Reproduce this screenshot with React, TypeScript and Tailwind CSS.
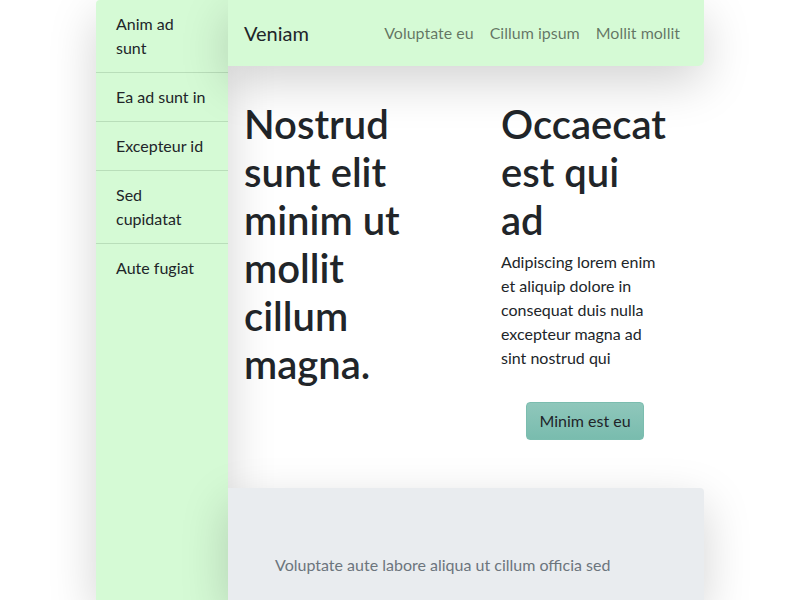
import React from 'react';

const sideItems = ['Anim ad sunt', 'Ea ad sunt in', 'Excepteur id', 'Sed cupidatat', 'Aute fugiat'];
const navLinks = ['Voluptate eu', 'Cillum ipsum', 'Mollit mollit'];

export default function App() {
  return (
    <div
      className="min-h-screen bg-white text-[#212529] overflow-hidden"
      style={{ fontFamily: 'Lato, "Open Sans", sans-serif' }}
    >
      <div className="mx-auto w-[608px] flex min-h-screen">
        {/* Sidebar */}
        <aside className="relative z-10 w-[132px] shrink-0 bg-[#d5fad5] rounded-tl shadow-[0_1rem_3rem_rgba(0,0,0,0.175)]">
          <ul className="flex flex-col">
            {sideItems.map((item, i) => (
              <li
                key={item}
                className={
                  'px-5 py-3 text-base leading-6 ' +
                  (i < sideItems.length - 1 ? 'border-b border-[#b9deba]' : '')
                }
              >
                {item}
              </li>
            ))}
          </ul>
        </aside>

        {/* Main */}
        <main className="flex-1 flex flex-col">
          <nav className="relative z-20 h-[66px] bg-[#d5fad5] rounded-br-md flex items-center justify-between pl-4 pr-4 shadow-[0_1rem_3rem_rgba(0,0,0,0.175)]">
            <span className="text-xl">Veniam</span>
            <div className="flex">
              {navLinks.map((l) => (
                <a key={l} className="px-2 text-base text-black/55">
                  {l}
                </a>
              ))}
            </div>
          </nav>

          <section className="flex pt-[34px] pb-12">
            <div className="w-[257px] pl-4 pr-4">
              <h1 className="text-[40px] leading-[48px] font-semibold w-[200px]">
                Nostrud sunt elit minim ut mollit cillum magna.
              </h1>
            </div>
            <div className="w-[200px] px-4 flex flex-col">
              <h1 className="text-[40px] leading-[48px] font-semibold mb-[6px]">Occaecat est qui ad</h1>
              <p className="text-base leading-6">
                Adipiscing lorem enim et aliquip dolore in consequat duis nulla excepteur magna ad sint nostrud qui
              </p>
              <div className="flex justify-center mt-8">
                <button className="h-[38px] px-3 rounded bg-gradient-to-b from-[#8fc7bb] to-[#79bcae] border border-[#7bbdaf] text-base">
                  Minim est eu
                </button>
              </div>
            </div>
          </section>

          <section className="relative z-10 flex-1 bg-[#e9ecef] rounded-tr pt-[65px] px-[47px] shadow-[0_1rem_3rem_rgba(0,0,0,0.175)]">
            <p className="text-base leading-6 text-[#6c757d]">
              Voluptate aute labore aliqua ut cillum officia sed
            </p>
          </section>
        </main>
      </div>
    </div>
  );
}
